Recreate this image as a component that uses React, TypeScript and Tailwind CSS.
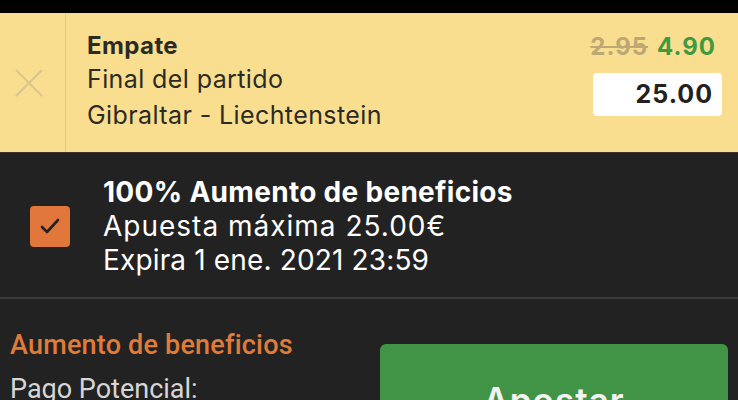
import React from "react";

export default function App() {
  const geo = { fontFamily: 'Inter, "Noto Sans", sans-serif' } as React.CSSProperties;
  const cond = { fontFamily: 'Roboto, "Noto Sans", sans-serif' } as React.CSSProperties;
  return (
    <div className="w-[738px] h-[400px] overflow-hidden bg-[#222222] flex flex-col" style={geo}>
      <div className="h-[13px] bg-black shrink-0" />
      <div className="h-[140px] shrink-0 flex bg-[#f9de8f] border-b border-[#3a3526]">
        <div className="w-[66px] shrink-0 flex items-center pl-[15px] border-r border-[#e5c97c]">
          <svg width="28" height="28" viewBox="0 0 28 28" fill="none" stroke="#d8c58e" strokeWidth="2" strokeLinecap="round">
            <path d="M1.5 1.5 L26.5 26.5 M26.5 1.5 L1.5 26.5" />
          </svg>
        </div>
        <div className="flex-1 pl-[21px] pt-[18px] text-[#2b2a24] tracking-[0.4px]">
          <div className="text-[24px] font-bold leading-[30px]">Empate</div>
          <div className="text-[25px] leading-[36px]">Final del partido</div>
          <div className="text-[25px] leading-[36px]">Gibraltar - Liechtenstein</div>
        </div>
        <div className="flex flex-col items-end pr-[16px] pt-[20px]">
          <div className="flex items-baseline gap-[9px] text-[24px] font-bold leading-[28px] tracking-[1px] pr-[6px]">
            <span className="text-[#bba874] line-through">2.95</span>
            <span className="text-[#3f9a3f]">4.90</span>
          </div>
          <div className="mt-[12px] w-[129px] h-[43px] bg-white rounded-[4px] flex items-center justify-end pr-[9px] text-[25px] font-bold text-[#222] tracking-[1px]">
            25.00
          </div>
        </div>
      </div>
      <div className="h-[146px] shrink-0 flex items-center border-b-2 border-[#3a3a3a]">
        <div className="ml-[30px] mt-[2px] w-[40px] h-[41px] rounded-[4px] bg-[#e2773c] flex items-center justify-center">
          <svg width="24" height="20" viewBox="0 0 24 20" fill="none" stroke="#222" strokeWidth="2.6" strokeLinecap="round" strokeLinejoin="round">
            <path d="M4 11 L9 16 L20 4" />
          </svg>
        </div>
        <div className="ml-[33px] text-white text-[28px] leading-[34px] mt-[2px]">
          <div className="font-bold tracking-[0.3px]">100% Aumento de beneficios</div>
          <div className="tracking-[1px]">Apuesta máxima 25.00€</div>
          <div className="tracking-[0.15px]">Expira 1 ene. 2021 23:59</div>
        </div>
      </div>
      <div className="flex-1 flex">
        <div className="w-[380px] shrink-0 pl-[10px] pt-[29px]" style={cond}>
          <div className="text-[27px] font-medium text-[#e07b3a] leading-[34px] tracking-[0.2px]">Aumento de beneficios</div>
          <div className="mt-[11px] text-[27px] text-[#d6d6d6] leading-[32px]">Pago Potencial:</div>
        </div>
        <div className="mt-[45px] w-[348px] h-[100px] rounded-[6px] bg-[#419345] flex justify-center pt-[38px]">
          <span className="text-[#f2f2f2] text-[35px] font-semibold leading-[36px] tracking-[1px]">Apostar</span>
        </div>
      </div>
    </div>
  );
}
